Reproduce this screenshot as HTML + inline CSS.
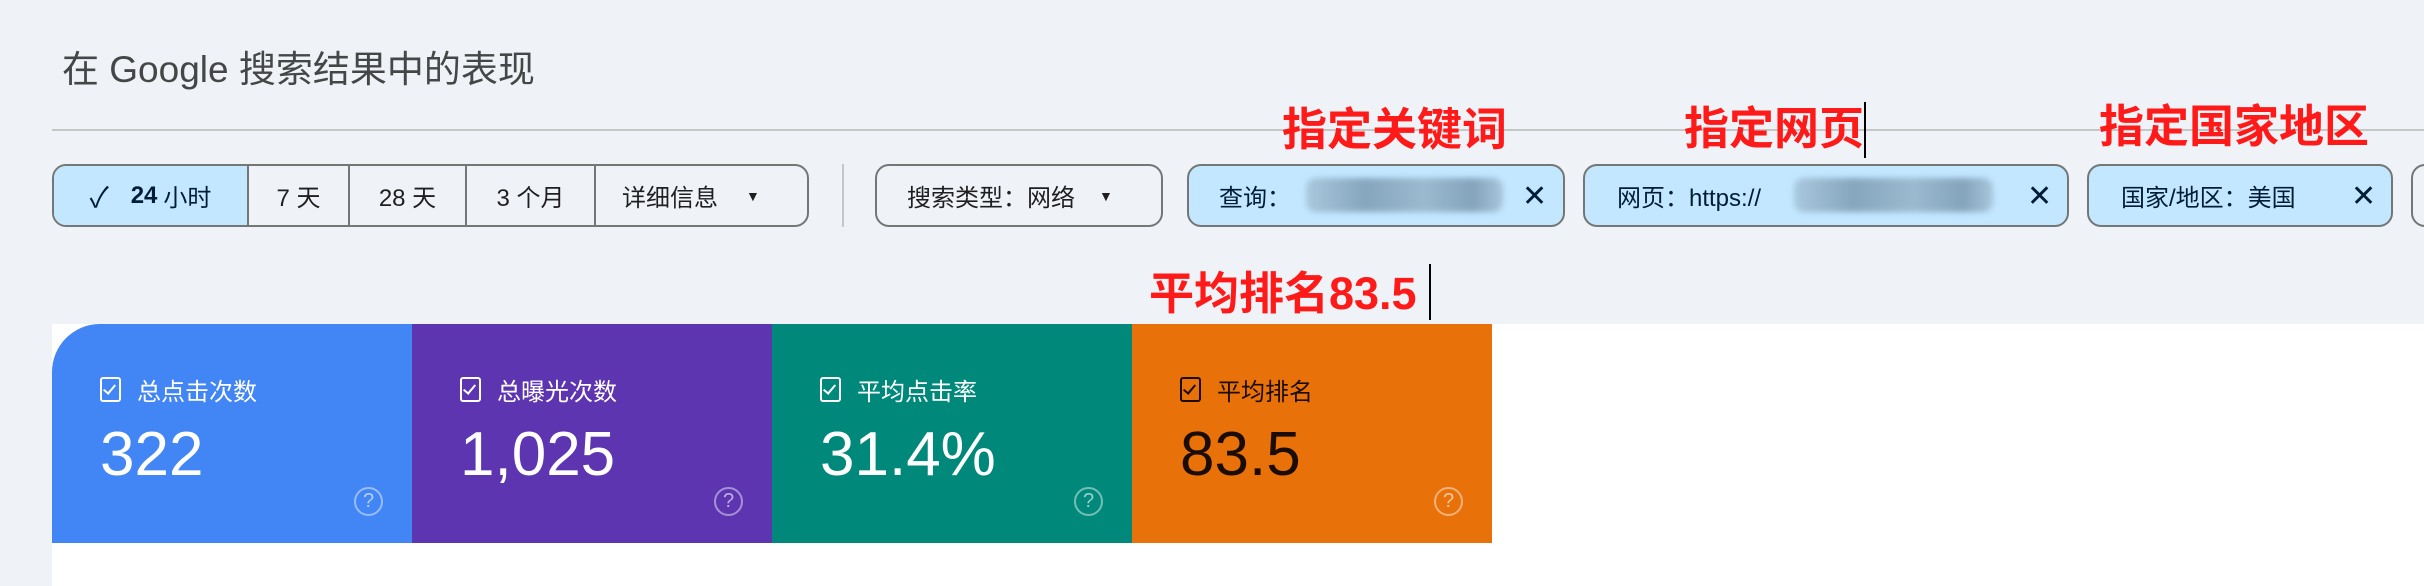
<!DOCTYPE html>
<html><head><meta charset="utf-8"><style>
*{margin:0;padding:0;box-sizing:border-box}
body{width:2424px;height:586px;background:#eff3f8;position:relative;overflow:hidden;font-family:"Liberation Sans","Noto Sans CJK SC",sans-serif;color:#1f1f1f}
.abs{position:absolute}
.title{left:62px;top:46px;font-size:37px;color:#444746;line-height:48px;white-space:nowrap}
.hr{left:52px;top:129px;right:0;height:2px;background:#c4c7c5}
.grp{left:52px;top:164px;width:757px;height:63px;border:2px solid #747775;border-radius:14px;display:flex;overflow:hidden}
.grp div{height:100%;display:flex;align-items:center;justify-content:center;font-size:24px;border-right:2px solid #747775;color:#1f1f1f}
.grp div:last-child{border-right:none}
.btn{top:164px;height:63px;border:2px solid #747775;border-radius:14px;display:flex;align-items:center;font-size:24px;white-space:nowrap}
.chip{background:#c2e7ff;color:#001d35}
.x{position:absolute;font-size:30px;top:13px;font-family:"DejaVu Sans",sans-serif;font-weight:300}
.blur{position:absolute;height:34px;top:12px;background:linear-gradient(90deg,#a9c8de,#86a6bd 30%,#9bbad0 60%,#84a4bb 85%,#a8c6dc);filter:blur(3px);border-radius:10px}
.red{color:#ff1a1a;font-weight:bold;font-size:45px;white-space:nowrap;line-height:50px}
.cur{width:2px;background:#000}
.card{top:324px;height:219px;width:360px;color:#fff}
.lab{position:absolute;left:48px;top:48px;font-size:24px;display:flex;align-items:center;white-space:nowrap}
.cb{width:21px;height:25px;border:2.5px solid currentColor;border-radius:3px;margin-right:16px;position:relative}
.cb:after{content:"";position:absolute;left:4px;top:3px;width:5px;height:10px;border:solid currentColor;border-width:0 2px 2px 0;transform:rotate(40deg)}
.num{position:absolute;left:48px;top:96px;font-size:62px;line-height:70px}
.q{position:absolute;left:302px;top:163px;width:29px;height:29px;border:2px solid rgba(255,255,255,.45);border-radius:50%;font-size:20px;text-align:center;line-height:25px;color:rgba(255,255,255,.6)}
</style></head><body>
<div class="abs title">在 Google 搜索结果中的表现</div>
<div class="abs hr"></div>
<div class="abs grp">
 <div style="width:195px;background:#c2e7ff;color:#001d35;font-weight:bold"><span style="font-size:28px;margin-right:22px;font-weight:normal">✓</span>24 <span style="font-weight:normal;margin-left:6px">小时</span></div>
 <div style="width:101px">7 天</div>
 <div style="width:117px">28 天</div>
 <div style="width:129px">3 个月</div>
 <div style="flex:1;justify-content:flex-start;padding-left:26px">详细信息<span style="font-size:14px;margin-left:28px">▼</span></div>
</div>
<div class="abs" style="left:842px;top:164px;width:2px;height:63px;background:#c4c7c5"></div>
<div class="abs btn" style="left:875px;width:288px;padding-left:30px">搜索类型：网络<span style="font-size:14px;margin-left:24px">▼</span></div>
<div class="abs btn chip" style="left:1187px;width:378px;padding-left:30px">查询：<div class="blur" style="left:117px;width:197px"></div><span class="x" style="left:333px">✕</span></div>
<div class="abs btn chip" style="left:1583px;width:486px;padding-left:32px">网页：https://<div class="blur" style="left:209px;width:199px"></div><span class="x" style="left:442px">✕</span></div>
<div class="abs btn chip" style="left:2087px;width:306px;padding-left:32px">国家/地区：美国<span class="x" style="left:262px">✕</span></div>
<div class="abs btn" style="left:2411px;width:60px"></div>
<div class="abs red" style="left:1282px;top:105px">指定关键词</div>
<div class="abs red" style="left:1684px;top:104px">指定网页</div>
<div class="abs cur" style="left:1864px;top:102px;height:56px"></div>
<div class="abs red" style="left:2099px;top:102px">指定国家地区</div>
<div class="abs red" style="left:1149px;top:269px">平均排名83.5</div>
<div class="abs cur" style="left:1429px;top:264px;height:56px"></div>
<div class="abs" style="left:52px;top:324px;right:0;bottom:0;background:#fff"></div>
<div class="abs card" style="left:52px;background:#4285f4;border-top-left-radius:48px"><div class="lab"><span class="cb"></span>总点击次数</div><div class="num">322</div><div class="q">?</div></div>
<div class="abs card" style="left:412px;background:#5e35b1"><div class="lab"><span class="cb"></span>总曝光次数</div><div class="num">1,025</div><div class="q">?</div></div>
<div class="abs card" style="left:772px;background:#00897b"><div class="lab"><span class="cb"></span>平均点击率</div><div class="num">31.4%</div><div class="q">?</div></div>
<div class="abs card" style="left:1132px;background:#e8710a;color:#1a0d00"><div class="lab"><span class="cb"></span>平均排名</div><div class="num">83.5</div><div class="q">?</div></div>
</body></html>
